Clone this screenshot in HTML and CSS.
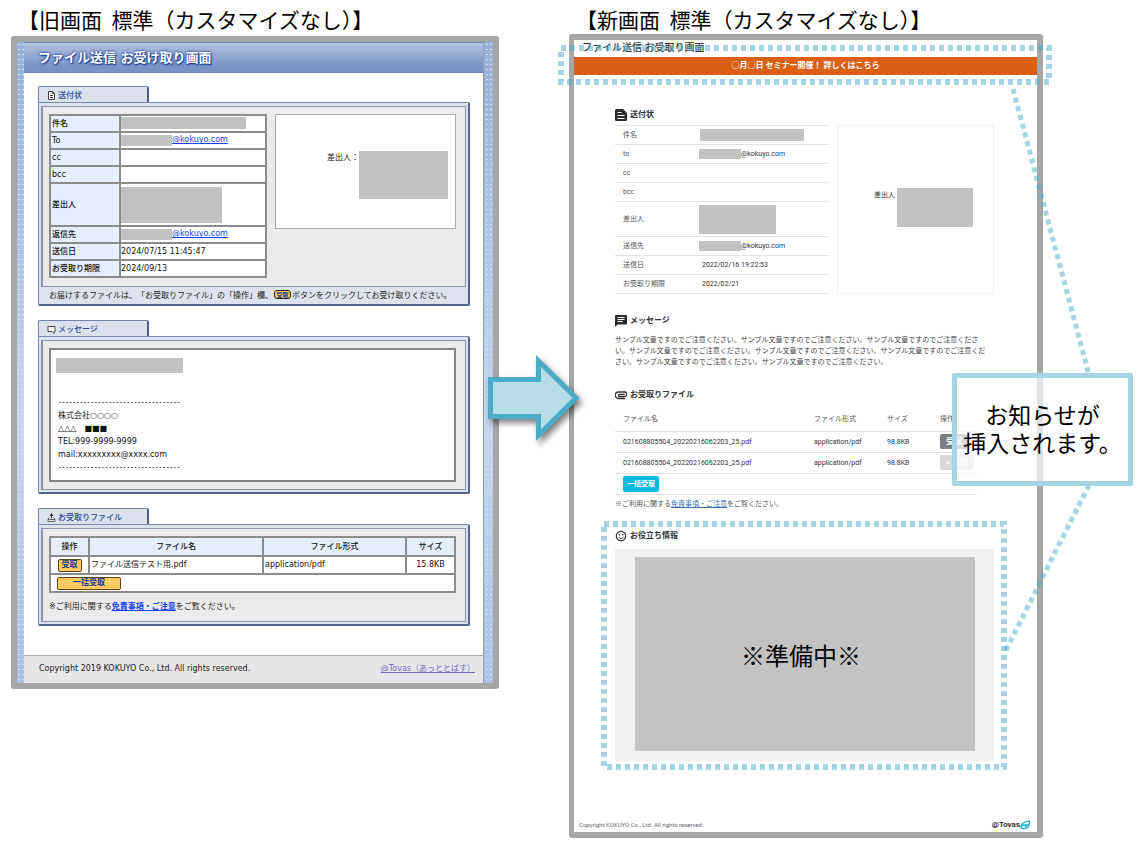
FILE: index.html
```html
<!DOCTYPE html>
<html lang="ja">
<head>
<meta charset="utf-8">
<title>お受け取り画面 新旧比較</title>
<link rel="stylesheet" href="styles.css">
</head>
<body>
<main class="compare">
  <section class="side side-old">
    <h1 class="caption">【旧画面&nbsp; 標準（カスタマイズなし）】</h1>
    <div class="window old">
      <div class="old-page">
        <header class="old-header">ファイル送信 お受け取り画面</header>
        <div class="old-body">
          <section class="box">
            <h2 class="tab"><svg class="tab-icon" viewBox="0 0 9 9"><path d="M1.5.5h4l2 2v6h-6zM5.500 .5v2h2M3 4.500h3M3 6.500h3" fill="#fff" stroke="#444"/></svg>送付状</h2>
            <div class="panel">
              <div class="inner cover">
                <table class="grid info">
                  <tr><th>件名</th><td><span class="mask m-subject"></span></td></tr>
                  <tr><th>To</th><td><span class="mask m-mail"></span><a href="#">@kokuyo.com</a></td></tr>
                  <tr><th>cc</th><td></td></tr>
                  <tr><th>bcc</th><td></td></tr>
                  <tr class="tall"><th>差出人</th><td><span class="mask m-sender"></span></td></tr>
                  <tr><th>返信先</th><td><span class="mask m-mail"></span><a href="#">@kokuyo.com</a></td></tr>
                  <tr><th>送信日</th><td>2024/07/15 11:45:47</td></tr>
                  <tr><th>お受取り期限</th><td>2024/09/13</td></tr>
                </table>
                <div class="card"><span>差出人：</span><span class="mask m-card"></span></div>
              </div>
              <p class="hint">お届けするファイルは、「お受取りファイル」の「操作」欄、<span class="pill">受取</span>ボタンをクリックしてお受け取りください。</p>
            </div>
          </section>
          <section class="box">
            <h2 class="tab"><svg class="tab-icon" viewBox="0 0 9 9"><path d="M1 1.500h7v5H7v2l-2-2H1z" fill="#fff" stroke="#444"/></svg>メッセージ</h2>
            <div class="panel">
              <div class="inner">
                <div class="message">
                  <span class="mask m-message"></span>
                  <p><span class="rule">----------------------------------</span></p>
                  <p>株式会社○○○○</p>
                  <p>△△△　■■■</p>
                  <p>TEL:999-9999-9999</p>
                  <p>mail:xxxxxxxxx@xxxx.com</p>
                  <p><span class="rule">----------------------------------</span></p>
                </div>
              </div>
            </div>
          </section>
          <section class="box">
            <h2 class="tab"><svg class="tab-icon" viewBox="0 0 9 9"><path d="M2.500 4.500L1 6v2.500h7V6L6.500 4.500M1 6.500h7" fill="none" stroke="#666"/><path d="M4.500 1v4.500" fill="none" stroke="#333"/><path d="M2.500 3l2-3 2 3z" fill="#333"/></svg>お受取りファイル</h2>
            <div class="panel">
              <div class="inner files-inner">
                <table class="grid files">
                  <tr><th class="c-op">操作</th><th>ファイル名</th><th class="c-type">ファイル形式</th><th class="c-size">サイズ</th></tr>
                  <tr><td class="mid"><button class="gold">受取</button></td><td>ファイル送信テスト用.pdf</td><td>application/pdf</td><td class="mid">15.8KB</td></tr>
                  <tr><td colspan="4" class="bulk"><button class="gold wide">一括受取</button></td></tr>
                </table>
                <p class="note">※ご利用に関する<a href="#">免責事項・ご注意</a>をご覧ください。</p>
              </div>
            </div>
          </section>
        </div>
        <footer class="old-footer"><span>Copyright 2019 KOKUYO Co., Ltd. All rights reserved.</span><a href="#">@Tovas（あっととばす）</a></footer>
      </div>
    </div>
    <svg class="arrow" viewBox="0 0 110 100">
      <path d="M10.500 29.500h48v-18.500l37.500 37-37.500 37v-18.500h-48z" fill="#b7dde8" stroke="#4bacc6" stroke-width="5"/>
    </svg>
  </section>

  <section class="side side-new">
    <h1 class="caption">【新画面&nbsp; 標準（カスタマイズなし）】</h1>
    <div class="window new">
      <header class="new-header">ファイル送信 お受取り画面</header>
      <a class="banner" href="#">○月○日 セミナー開催！ 詳しくはこちら</a>
      <div class="new-body">
        <h2 class="head"><svg viewBox="0 0 12 12"><path fill="#2c2c2c" d="M1.500 0H8l4 4v6.500a1.500 1.500 0 0 1-1.500 1.500h-9A1.500 1.500 0 0 1 0 10.500v-9A1.500 1.500 0 0 1 1.500 0z"/><path stroke="#fff" d="M2.500 3.500h4M2.500 6.500h7M2.500 9.500h7"/></svg>送付状</h2>
        <div class="new-cover">
          <table class="plain facts">
            <tr><th>件名</th><td><span class="mask n-subject"></span></td></tr>
            <tr><th>to</th><td><span class="mask n-mail"></span>@kokuyo.com</td></tr>
            <tr><th>cc</th><td></td></tr>
            <tr><th>bcc</th><td></td></tr>
            <tr class="tall"><th>差出人</th><td><span class="mask n-sender"></span></td></tr>
            <tr><th>送信先</th><td><span class="mask n-mail"></span>@kokuyo.com</td></tr>
            <tr><th>送信日</th><td class="date">2022/02/16 19:22:53</td></tr>
            <tr><th>お受取り期限</th><td class="date">2022/02/21</td></tr>
          </table>
          <div class="new-card"><span>差出人</span><span class="mask n-card"></span></div>
        </div>

        <h2 class="head head-message"><svg viewBox="0 0 12 12"><path fill="#2c2c2c" d="M1 0h10a1 1 0 0 1 1 1v7.500a1 1 0 0 1-1 1H2.500L0 12V1a1 1 0 0 1 1-1z"/><path stroke="#fff" d="M2.500 2.500h7M2.500 4.500h7M2.500 6.500h5"/></svg>メッセージ</h2>
        <p class="sample">サンプル文章ですのでご注意ください。サンプル文章ですのでご注意ください。サンプル文章ですのでご注意くださ<br>い。サンプル文章ですのでご注意ください。サンプル文章ですのでご注意ください。サンプル文章ですのでご注意くだ<br>さい。サンプル文章ですのでご注意ください。サンプル文章ですのでご注意ください。</p>

        <h2 class="head head-files"><svg viewBox="0 0 12 12"><path fill="none" stroke="#333" stroke-width="1.300" d="M10 9.500H3.500a3 3 0 0 1 0-6.500h6a2 2 0 0 1 0 4.500H4.500a1 1 0 0 1 0-2.200H9.500"/></svg>お受取りファイル</h2>
        <table class="plain list">
          <tr><th class="l-name">ファイル名</th><th class="l-type">ファイル形式</th><th class="l-size">サイズ</th><th>操作</th></tr>
          <tr><td>021608805504_20220216062203_25.pdf</td><td>application/pdf</td><td>98.8KB</td><td class="op"><button class="flat">受取</button></td></tr>
          <tr><td>021608805504_20220216062203_25.pdf</td><td>application/pdf</td><td>98.8KB</td><td class="op"><button class="flat off">× 受取</button></td></tr>
          <tr><td colspan="4"><button class="flat cyan">一括受取</button></td></tr>
        </table>
        <p class="new-note">※ご利用に関する<a href="#">免責事項・ご注意</a>をご覧ください。</p>

        <section class="tips">
          <h2 class="head"><svg viewBox="0 0 12 12"><circle cx="6" cy="6" r="4.700" fill="none" stroke="#333" stroke-width="1.200"/><circle cx="4.300" cy="4.800" r=".8" fill="#333"/><circle cx="7.700" cy="4.800" r=".8" fill="#333"/><path d="M3.500 7.200q2.500 3 5 0" fill="none" stroke="#333"/></svg>お役立ち情報</h2>
          <div class="tips-panel"><div class="tips-body">※準備中※</div></div>
          <svg class="dots around-tips"><rect x="0" y="0" width="100%" height="100%"/></svg>
        </section>
      </div>
      <footer class="new-footer"><span>Copyright KOKUYO Co., Ltd. All rights reserved.</span><span class="brand">@Tovas<svg viewBox="0 0 10 10"><path d="M1 8C.5 4 4 1.500 9.500 1.200 9.500 5 8 8.500 4 8.700 1 9 .5 6 3.500 5h4L5 7" fill="none" stroke="#1fb0d8" stroke-width="1.300"/></svg></span></footer>
      <svg class="dots around-banner"><rect x="0" y="0" width="100%" height="100%"/></svg>
      <svg class="links" viewBox="0 0 100 580"><path d="M12 4L88 290M88 400L3 569"/></svg>
      <aside class="callout">お知らせが<br>挿入されます。</aside>
    </div>
  </section>
</main>
</body>
</html>
```
FILE: styles.css
```css
* { box-sizing: border-box; }
body {
  margin: 0;
  background: #fff;
  color: #222;
  font-family: "DejaVu Sans", "Noto Sans CJK JP", sans-serif;
  font-size: 8px;
}
h1, h2, p { margin: 0; font-weight: 400; }
table { border-collapse: collapse; }
th { font-weight: 400; text-align: left; }
th, td { padding: 0; }
button { font: inherit; padding: 0; display: block; }
a { color: #0b45f0; }

.compare {
  display: grid;
  grid-template-columns: 488fr 474fr;
  align-items: start;
  column-gap: 70px;
  padding: 0 98px 12px 11px;
  overflow: hidden;
}
.side { position: relative; min-width: 0; }
.caption {
  height: 36px;
  padding-left: 7px;
  font: 400 21px/38px "Noto Sans CJK JP", sans-serif;
  color: #000;
  white-space: nowrap;
}
.side-new .caption { height: 34px; }
.window { border: 6px solid #a6a6a6; border-radius: 3px; }
.mask { display: block; flex: none; background: #c2c2c2; }

/* Old screen */
.old {
  padding: 0 9px 0 7px;
  background:
    radial-gradient(circle, #d3def2 1px, transparent 1px) 0 0 / 4px 5px,
    linear-gradient(#9aafd9, #c8d5ec 60%, #adc0e2);
}
.old-page { background: #fff; border-right: 1px solid #8d9cb9; }
.old-header {
  height: 31px;
  padding-left: 14px;
  border: solid #6b8abf;
  border-width: 1px 0;
  background: linear-gradient(#b5c1df, #7894c5 80%);
  color: #fff;
  font-size: 13px;
  font-weight: 700;
  line-height: 30px;
  text-shadow: 0 0 2px #1d4396, 1px 1px 1px #1d4396, 0 0 3px #1d4396;
}
.old-body { padding: 13px 13px 29px 14px; display: grid; gap: 14px; }
.tab {
  display: flex;
  align-items: center;
  gap: 2px;
  width: 111px;
  height: 16px;
  padding: 2px 0 0 8px;
  border: 1px solid #7384ac;
  border-right: 2px solid #4a608f;
  border-bottom: 0;
  border-radius: 2px 2px 0 0;
  background: #dce1ec;
  color: #2b4a9b;
  font-size: 8px;
  font-weight: 500;
  line-height: 12px;
  white-space: nowrap;
}
.tab-icon { width: 9px; height: 9px; }
.panel {
  padding: 3px 2px 2px 2px;
  border: 1px solid #7a8bb3;
  border-right: 2px solid #50658f;
  border-bottom: 2px solid #50658f;
  border-radius: 0 2px 2px 2px;
  background: #dde2ec;
}
.inner {
  padding: 7px 9px 7px 6px;
  border: 1px solid #8694b2;
  border-left-width: 2px;
  background: #ebebeb;
}
.cover { display: flex; gap: 8px; align-items: flex-start; padding-bottom: 8px; }
.grid td, .grid th {
  height: 17px;
  padding: 0 1px;
  border: 2px solid #8c8c8c;
  background: #fff;
  color: #111;
  line-height: 12px;
  white-space: nowrap;
}
.grid th { background: #e6edfd; font-weight: 500; }
.info { flex: 0 0 218px; table-layout: fixed; width: 218px; }
.info th { width: 70px; }
.info td { padding-left: 0; }
.info td .mask, .info td a { display: inline-block; vertical-align: middle; }
.grid .tall th, .grid .tall td { height: 43px; }
.m-subject { width: 125px; height: 12px; }
.m-mail { width: 51px; height: 11px; }
.m-sender { width: 101px; height: 36px; }
.card {
  flex: 1;
  display: flex;
  justify-content: flex-end;
  height: 115px;
  padding: 36px 7px 0 0;
  border: 1px solid #aaa;
  background: #fff;
  line-height: 14px;
  color: #111;
}
.m-card { width: 89px; height: 48px; }
.hint {
  display: flex;
  align-items: center;
  height: 15px;
  padding-left: 8px;
  color: #222;
  white-space: nowrap;
  text-spacing-trim: space-all;
}
.pill {
  width: 17px;
  height: 9px;
  margin: 0 1px;
  border: 1px solid #222;
  border-radius: 3px;
  background: #ffc94f;
  color: #123c9c;
  font-size: 6px;
  font-weight: 700;
  line-height: 7px;
  text-align: center;
}
.message {
  min-height: 134px;
  padding: 8px 5px 6px;
  border: 2px solid #858585;
  background: #fff;
  color: #111;
  line-height: 13px;
}
.message p { padding-left: 2px; }
.m-message { width: 127px; height: 15px; margin-bottom: 23px; }
.rule { font: 700 6px/13px "Liberation Mono", monospace; display: block; color: #000; }
.files { width: 100%; table-layout: fixed; }
.files th { height: 19px; text-align: center; }
.files td { height: 18px; }
.c-op { width: 39px; }
.c-type { width: 143px; }
.c-size { width: 49px; }
.files .mid { text-align: center; }
.files .bulk { padding-left: 6px; }
.gold {
  width: 24px;
  height: 13px;
  margin: 0 auto;
  border: 1px solid #5b4516;
  border-radius: 2px;
  background: #ffcb61;
  color: #123c9c;
  font-weight: 700;
  line-height: 10px;
}
.gold.wide { width: 64px; margin: 0; }
.note { height: 28px; line-height: 27px; color: #222; }
.files-inner { padding-bottom: 0; }
.note a { font-weight: 700; }
.old-footer {
  display: flex;
  justify-content: space-between;
  height: 28px;
  padding: 0 8px 0 15px;
  border-top: 1px solid #aaa;
  background: #e6e6e6;
  line-height: 26px;
}
.old-footer a { color: #7568cc; }
.arrow {
  position: absolute;
  top: 350px;
  right: -91px;
  z-index: 3;
  width: 110px;
  height: 100px;
  filter: drop-shadow(3px 4px 3px rgba(0, 0, 0, .5));
}

/* New screen */
.new {
  position: relative;
  border-width: 6px 6px 6px 5px;
  font-family: Roboto, "Noto Sans CJK JP", sans-serif;
  font-size: 7px;
  color: #333;
}
.new-header { height: 17px; padding-left: 8px; font-size: 10px; font-weight: 500; line-height: 16px; }
.banner {
  display: block;
  height: 18px;
  background: #dc6014;
  color: #fff;
  font-size: 8px;
  font-weight: 700;
  line-height: 17px;
  text-align: center;
  text-decoration: none;
}
.new-body { padding: 32px 43px 0 41px; }
.head {
  display: flex;
  align-items: center;
  gap: 3px;
  height: 16px;
  font-size: 8px;
  font-weight: 700;
  line-height: 16px;
}
.head svg { width: 12px; height: 12px; }
.new-cover { display: flex; gap: 8px; margin-top: 2px; }
.plain th, .plain td {
  height: 19px;
  padding: 0 0 0 8px;
  border: solid #e2e2e2;
  border-width: 1px 0;
  line-height: 10px;
  white-space: nowrap;
}
.plain th { color: #555; }
.facts { flex: 0 0 214px; width: 214px; table-layout: fixed; }
.facts th { width: 84px; }
.facts td { padding-left: 0; }
.facts td.date { padding-left: 3px; }
.facts .tall th, .facts .tall td { height: 35px; }
.facts .mask { display: inline-block; vertical-align: middle; }
.n-subject { width: 104px; height: 12px; margin-left: 1px; }
.n-mail { width: 42px; height: 10px; }
.n-sender { width: 77px; height: 29px; }
.new-card {
  flex: 1;
  display: flex;
  justify-content: flex-end;
  gap: 2px;
  padding: 62px 20px 0 0;
  border: 1px solid #eee;
  line-height: 14px;
}
.n-card { width: 76px; height: 39px; }
.head-message { margin-top: 19px; }
.sample { margin-top: 6px; line-height: 11px; color: #444; white-space: nowrap; }
.head-files { margin-top: 19px; }
.list { width: 362px; margin-top: 5px; table-layout: fixed; }
.list td { height: 21px; }
.list th { height: 23px; border-top: 0; }
.l-name { width: 191px; }
.l-type { width: 73px; }
.l-size { width: 53px; }
.flat {
  width: 28px;
  height: 15px;
  border: 0;
  border-radius: 2px;
  background: #7c7c82;
  color: #fff;
  font-size: 8px;
  font-weight: 700;
  line-height: 14px;
}
.flat.off { width: 34px; background: #d8d8d8; color: #f6f6f6; }
.flat.cyan { width: 36px; height: 16px; background: #0cb9df; font-size: 7px; }
.new-note { margin-top: 4px; line-height: 11px; color: #555; }
.new-note a { color: #3b6fb5; }
.tips { position: relative; margin-top: 18px; }
.tips-panel { margin-top: 5px; padding: 8px 19px 10px 20px; background: #f1f1f1; }
.tips-body {
  display: grid;
  place-items: center;
  height: 194px;
  padding: 2px 8px 0 0;
  background: #c3c3c3;
  color: #000;
  font-size: 24px;
}
.new-footer {
  display: flex;
  justify-content: space-between;
  height: 14px;
  margin-top: 57px;
  padding: 0 7px 0 5px;
  font-size: 6px;
  line-height: 14px;
  color: #666;
}
.brand { display: flex; align-items: center; font-size: 8px; font-weight: 700; color: #333; }
.brand svg { width: 10px; height: 10px; }

/* Annotations */
.dots { position: absolute; overflow: visible; pointer-events: none; }
.dots rect, .links path {
  fill: none;
  stroke: #4bacc6;
  stroke-opacity: .5;
  stroke-width: 6;
  stroke-dasharray: 5 4;
}
.links path { stroke-width: 5; }
.around-banner { top: 8px; left: -13px; width: calc(100% + 25px); height: 34px; }
.around-tips { top: -4px; left: -11px; width: calc(100% + 21px); height: 243px; }
.links { position: absolute; top: 45px; right: -64px; width: 100px; height: 580px; }
.callout {
  position: absolute;
  top: 333px;
  right: -96px;
  width: 181px;
  height: 113px;
  padding-top: 22px;
  border: 5px solid #a5d5e3;
  border-radius: 2px;
  background: rgba(255, 255, 255, .7);
  color: #000;
  font: 400 23px/28px "Noto Sans CJK JP", sans-serif;
  text-align: center;
  white-space: nowrap;
}
```
